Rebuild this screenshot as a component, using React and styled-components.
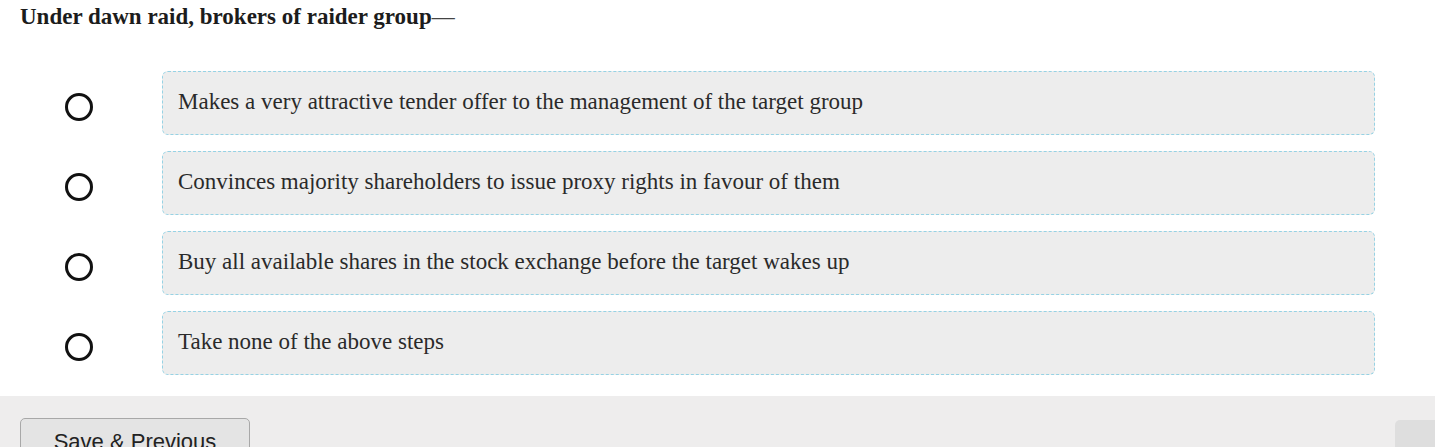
import React from 'react';
import styled, { createGlobalStyle } from 'styled-components';

const GlobalStyle = createGlobalStyle`
  html, body {
    margin: 0;
    padding: 0;
    background: #ffffff;
    overflow: hidden;
  }
`;

const Page = styled.div`
  width: 1435px;
  height: 447px;
  display: flex;
  flex-direction: column;
  font-family: 'Liberation Serif', 'Times New Roman', serif;
  color: #222;
`;

const Question = styled.div`
  padding: 5px 20px 0;
  font-size: 23px;
  font-weight: bold;
  color: #1c1c1c;
  line-height: 24px;
`;

const Dash = styled.span`
  font-weight: normal;
  color: #444;
`;

const OptionList = styled.div`
  display: flex;
  flex-direction: column;
  gap: 16px;
  padding: 42px 0 0 64px;
  width: 1311px;
`;

const OptionRow = styled.div`
  display: flex;
  align-items: center;
`;

const RadioCell = styled.div`
  width: 98px;
  display: flex;
  align-items: center;
  padding-top: 7px;
`;

const Radio = styled.span`
  width: 22px;
  height: 22px;
  border: 3px solid #111;
  border-radius: 50%;
  box-sizing: content-box;
  display: block;
  margin-left: 1px;
`;

const OptionBox = styled.div`
  flex: 1;
  box-sizing: border-box;
  height: 64px;
  display: flex;
  align-items: center;
  padding: 0 15px 2px;
  background: #ededed;
  border: 1px dashed #96d2e4;
  border-radius: 6px;
  font-size: 23px;
  color: #2a2a2a;
`;

const Footer = styled.div`
  margin-top: auto;
  height: 51px;
  background: #eeeded;
  display: flex;
  justify-content: space-between;
  align-items: flex-start;
  padding: 22px 0 0 20px;
  box-sizing: border-box;
`;

const Button = styled.button`
  font-family: 'Liberation Sans', Arial, sans-serif;
  font-size: 22px;
  line-height: 26px;
  color: #222;
  background: #e4e4e4;
  border: 1px solid #a8a8a8;
  border-radius: 5px;
  width: ${({ w }) => w}px;
  height: 40px;
  padding: 8px 0 0;
  text-align: center;
  align-self: flex-start;
`;

const GhostButton = styled.div`
  width: 40px;
  height: 40px;
  margin-top: 2px;
  background: #dedede;
  border-radius: 5px 0 0 0;
`;

const options = [
  'Makes a very attractive tender offer to the management of the target group',
  'Convinces majority shareholders to issue proxy rights in favour of them',
  'Buy all available shares in the stock exchange before the target wakes up',
  'Take none of the above steps',
];

const App = () => (
  <Page>
    <GlobalStyle />
    <Question>
      Under dawn raid, brokers of raider group<Dash>—</Dash>
    </Question>
    <OptionList>
      {options.map(text => (
        <OptionRow key={text}>
          <RadioCell>
            <Radio />
          </RadioCell>
          <OptionBox>{text}</OptionBox>
        </OptionRow>
      ))}
    </OptionList>
    <Footer>
      <Button w={230}>Save &amp; Previous</Button>
      <GhostButton />
    </Footer>
  </Page>
);

export default App;
